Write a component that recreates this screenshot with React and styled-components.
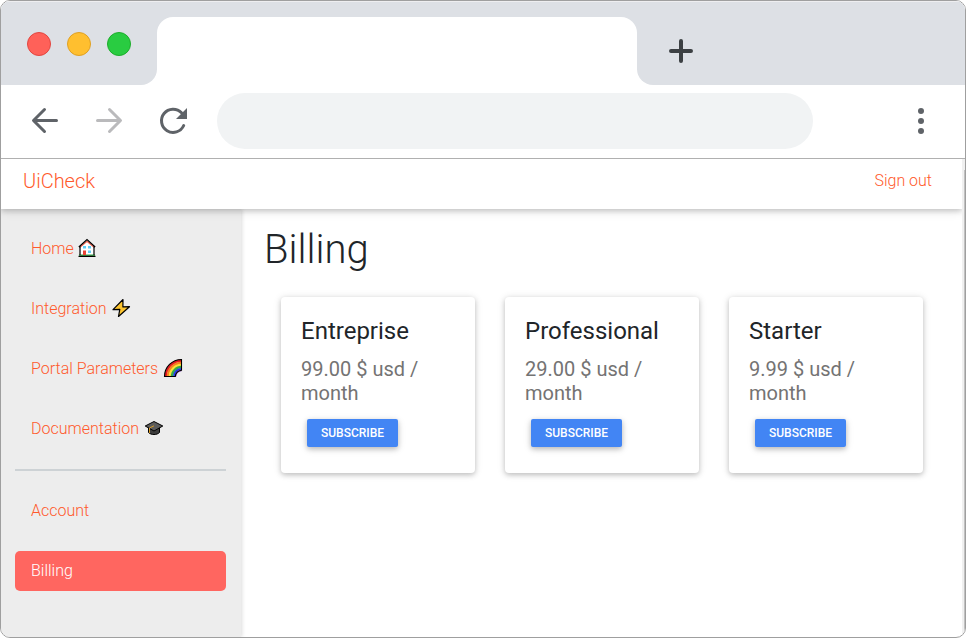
import React from "react";
import styled, { createGlobalStyle } from "styled-components";

const GlobalStyle = createGlobalStyle`
  *, *::before, *::after { box-sizing: border-box; }
  html, body { margin: 0; padding: 0; background: #fff; }
  body { font-family: Roboto, "Liberation Sans", sans-serif; font-size: 16px; font-weight: 300; color: #212529; }
  h1, h2, h3, p { margin: 0; }
`;

const Window = styled.div`
  display: flex;
  flex-direction: column;
  width: 966px;
  height: 638px;
  border: 1px solid #9f9f9f;
  border-radius: 10px;
  overflow: hidden;
  background: #fff;
`;

const TabStrip = styled.div`
  display: grid;
  grid-template-columns: 156px 480px 1fr;
  height: 84px;
  flex: none;
  background: #fff;
`;

const StripSide = styled.div`
  display: flex;
  background: #dde0e5;
  box-shadow: inset 0 1px #eeeef0;
  border-radius: ${(p) => (p.$end ? "0 0 0 16px" : "0 0 16px 0")};
  padding: ${(p) => (p.$end ? "38px 0 0 32px" : "31px 0 0 26px")};
  gap: 16px;
`;

const TabSlot = styled.div`
  background: #dde0e5;
  box-shadow: inset 0 1px #eeeef0;
  padding-top: 16px;
`;

const Tab = styled.div`
  height: 68px;
  background: #fff;
  border-radius: 16px 16px 0 0;
`;

const Light = styled.span`
  width: 24px;
  height: 24px;
  border-radius: 50%;
  background: ${(p) => p.$fill};
  border: 1px solid ${(p) => p.$edge};
`;

const Toolbar = styled.div`
  display: flex;
  align-items: center;
  height: 74px;
  flex: none;
  padding: 0 28px 1px;
  border-bottom: 1px solid #b0b0b0;
  svg { display: block; flex: none; }
`;

const NavButtons = styled.div`
  display: flex;
  gap: 32px;
`;

const Address = styled.div`
  width: 596px;
  height: 56px;
  margin: 0 auto 0 28px;
  border-radius: 28px;
  background: #f1f3f4;
`;

const Viewport = styled.div`
  display: flex;
  flex: 1;
  min-height: 0;
`;

const Page = styled.div`
  display: flex;
  flex-direction: column;
  flex: 1;
  min-width: 0;
  overflow: hidden;
`;

const ScrollTrack = styled.div`
  width: 3px;
  padding: 11px 0 0 2px;
  background: #f0f0f0;
`;

const ScrollThumb = styled.div`
  height: 100%;
  background: #c1c1c1;
`;

const Header = styled.header`
  position: relative;
  z-index: 1;
  display: flex;
  justify-content: space-between;
  height: 50px;
  flex: none;
  padding: 10px 30px 0 22px;
  background: #fff;
  color: #ff5a2c;
  box-shadow: 0 2px 5px rgba(0, 0, 0, 0.16), 0 2px 10px rgba(0, 0, 0, 0.12);
`;

const Brand = styled.span`
  font-size: 20px;
  line-height: 24px;
`;

const SignOut = styled.span`
  font-size: 16px;
  line-height: 24px;
`;

const Body = styled.div`
  display: flex;
  flex: 1;
  min-height: 0;
`;

const Sidebar = styled.nav`
  width: 240px;
  flex: none;
  padding: 19px 15px 0 14px;
  background: #ededed;
  box-shadow: 1px 0 4px rgba(0, 0, 0, 0.14);
`;

const NavItem = styled.div`
  display: flex;
  align-items: center;
  height: 40px;
  padding: ${(p) => (p.$active ? "0 16px 2px" : "0 16px")};
  margin-bottom: ${(p) => (p.$last ? "21px" : "20px")};
  border-radius: 5px;
  color: ${(p) => (p.$active ? "#fff" : "#ff5a2c")};
  background: ${(p) => (p.$active ? "#ff6660" : "transparent")};
  svg { margin-left: ${(p) => p.$gap}px; }
`;

const Divider = styled.div`
  height: 2px;
  margin-bottom: 19px;
  background: #cdd2d5;
`;

const Main = styled.main`
  flex: 1;
  padding: 17px 0 0 23px;
`;

const Title = styled.h1`
  font-size: 40px;
  line-height: 48px;
  font-weight: 300;
`;

const Plans = styled.div`
  display: flex;
  gap: 30px;
  padding: 23px 0 0 17px;
`;

const PlanCard = styled.section`
  width: 194px;
  height: 176px;
  padding: 20px;
  border-radius: 4px;
  background: #fff;
  box-shadow: 0 2px 5px rgba(0, 0, 0, 0.18), 0 1px 8px rgba(0, 0, 0, 0.12);
`;

const PlanName = styled.h2`
  font-size: 24px;
  line-height: 29px;
  font-weight: 400;
`;

const Price = styled.p`
  margin-top: 11px;
  font-size: 20px;
  line-height: 24px;
  font-weight: 400;
  color: #747373;
`;

const Subscribe = styled.button`
  display: block;
  width: 91px;
  height: 28px;
  margin: 14px 0 0 6px;
  padding: 0;
  border: 0;
  border-radius: 2px;
  background: #4285f4;
  color: #fff;
  font: 500 12px/28px Roboto, "Liberation Sans", sans-serif;
  text-transform: uppercase;
  box-shadow: 0 2px 5px rgba(0, 0, 0, 0.2), 0 2px 8px rgba(0, 0, 0, 0.12);
`;

const ArrowIcon = ({ forward }) => (
  <svg width="32" height="32" viewBox="0 0 32 32" fill="none" stroke={forward ? "#bababc" : "#5f6368"} strokeWidth="3" strokeLinecap="round" strokeLinejoin="round">
    {forward ? <path d="M4.5 15.5H27M16.5 4.5l11 11-11 11" /> : <path d="M27.5 15.5H5M15.5 4.5l-11 11 11 11" />}
  </svg>
);

const ReloadIcon = () => (
  <svg width="32" height="32" viewBox="0 0 32 32">
    <path d="M26.7 20.5A11.6 11.6 0 1 1 24.5 7.8" fill="none" stroke="#5f6368" strokeWidth="3" strokeLinecap="round" />
    <path d="M30 3v11H19z" fill="#5f6368" />
  </svg>
);

const MoreIcon = () => (
  <svg width="32" height="32" viewBox="0 0 32 32" fill="#5f6368">
    <circle cx="16" cy="6" r="3" />
    <circle cx="16" cy="16" r="3" />
    <circle cx="16" cy="26" r="3" />
  </svg>
);

const PlusIcon = () => (
  <svg width="24" height="24" viewBox="0 0 24 24" stroke="#3c4043" strokeWidth="4" strokeLinecap="round">
    <path d="M12 2v20M2 12h20" />
  </svg>
);

const HouseIcon = () => (
  <svg width="20" height="20" viewBox="0 0 20 20">
    <path d="M3.5 8.5L10 2.5l6.5 6V18h-13z" fill="#fff" />
    <path d="M2.8 9.3L10 3.3l7.2 6" fill="none" stroke="#ea5a47" strokeWidth="1.3" />
    <path d="M2 17.2h16" stroke="#3ba24a" strokeWidth="1.5" />
    <path d="M6 12.5h3V17H6z" fill="#ea4335" />
    <path d="M6 8h3v2.5H6zM11 8h3v2.5h-3zM11 12.5h3V15h-3z" fill="#61cdf5" />
    <path d="M3 8.5V17M17 8.5V17M1.8 9L10 1.6 18.2 9M1.5 18.4h17" fill="none" stroke="#000" strokeWidth="1.2" />
  </svg>
);

const BoltIcon = () => (
  <svg width="20" height="20" viewBox="0 0 20 20">
    <path d="M12 1.5L2 11.7l6.8-.4L7.5 18.5l11-9.8-6.6.2z" fill="#fcc42f" stroke="#000" strokeWidth="1.2" strokeLinejoin="round" />
  </svg>
);

const RainbowIcon = () => (
  <svg width="20" height="20" viewBox="0 0 20 20" fill="none" strokeWidth="2.5">
    <path d="M2.8 18.5A15.7 15.7 0 0 1 18.5 2.8" stroke="#e51b23" />
    <path d="M5 18.5A13.5 13.5 0 0 1 18.5 5" stroke="#f58220" />
    <path d="M7 18.5A11.5 11.5 0 0 1 18.5 7" stroke="#fce034" />
    <path d="M9 18.5A9.5 9.5 0 0 1 18.5 9" stroke="#36a849" />
    <path d="M11 18.5A7.5 7.5 0 0 1 18.5 11" stroke="#2536ed" strokeWidth="2" />
    <path d="M12.5 18.5a6 6 0 0 1 6-6" stroke="#7b43ad" strokeWidth="1.5" />
    <path d="M1.5 18.5A17 17 0 0 1 18.5 1.5V12.2c-3.3.3-6 3-6.2 6.3z" stroke="#000" strokeWidth="1.1" />
  </svg>
);

const CapIcon = () => (
  <svg width="20" height="20" viewBox="0 0 20 20" stroke="#000" strokeLinejoin="round">
    <path d="M4.5 9v5.5c2.5 2.7 8.5 2.7 11 0V9z" fill="#3c3c3c" />
    <path d="M1.2 8L10 3.5 18.8 8 10 13z" fill="#5c5c5c" />
    <path d="M10 7.8L5.5 10v5" fill="none" stroke="#d79a25" strokeWidth="1" />
  </svg>
);

const LINKS = [
  { label: "Home", icon: <HouseIcon />, gap: 3 },
  { label: "Integration", icon: <BoltIcon />, gap: 4 },
  { label: "Portal Parameters", icon: <RainbowIcon />, gap: 5 },
  { label: "Documentation", icon: <CapIcon />, gap: 5 },
];

const PLANS = [
  { name: "Entreprise", price: "99.00 $ usd / month" },
  { name: "Professional", price: "29.00 $ usd / month" },
  { name: "Starter", price: "9.99 $ usd / month" },
];

export default function App() {
  return (
    <>
      <GlobalStyle />
      <Window>
        <TabStrip>
          <StripSide>
            <Light $fill="#ff6159" $edge="#e24640" />
            <Light $fill="#ffbf2f" $edge="#dfa023" />
            <Light $fill="#29cc41" $edge="#1dad2b" />
          </StripSide>
          <TabSlot><Tab /></TabSlot>
          <StripSide $end><PlusIcon /></StripSide>
        </TabStrip>
        <Toolbar>
          <NavButtons>
            <ArrowIcon />
            <ArrowIcon forward />
            <ReloadIcon />
          </NavButtons>
          <Address />
          <MoreIcon />
        </Toolbar>
        <Viewport>
          <Page>
            <Header>
              <Brand>UiCheck</Brand>
              <SignOut>Sign out</SignOut>
            </Header>
            <Body>
              <Sidebar>
                {LINKS.map((link, i) => (
                  <NavItem key={link.label} $gap={link.gap} $last={i === LINKS.length - 1}>
                    {link.label}{link.icon}
                  </NavItem>
                ))}
                <Divider />
                <NavItem $last>Account</NavItem>
                <NavItem $active>Billing</NavItem>
              </Sidebar>
              <Main>
                <Title>Billing</Title>
                <Plans>
                  {PLANS.map((plan) => (
                    <PlanCard key={plan.name}>
                      <PlanName>{plan.name}</PlanName>
                      <Price>{plan.price}</Price>
                      <Subscribe>Subscribe</Subscribe>
                    </PlanCard>
                  ))}
                </Plans>
              </Main>
            </Body>
          </Page>
          <ScrollTrack><ScrollThumb /></ScrollTrack>
        </Viewport>
      </Window>
    </>
  );
}
